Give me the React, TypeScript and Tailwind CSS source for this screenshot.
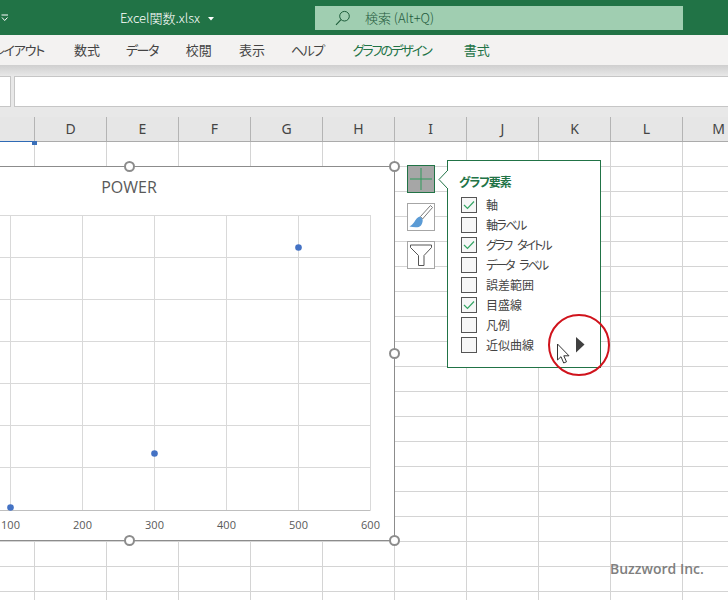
import React from "react";

const jp = "font-['Noto_Sans_CJK_JP','Noto_Sans',sans-serif] [font-feature-settings:'palt']";
const tabs: [string, string][] = [
  ["レイアウト", "ml-[-21px] w-[65px] text-right tracking-[-1.2px] text-[#444]"],
  ["数式", "ml-[30px] text-[#444]"],
  ["データ", "ml-[26px] tracking-[-1.5px] text-[#444]"],
  ["校閲", "ml-[28px] text-[#444]"],
  ["表示", "ml-[27px] text-[#444]"],
  ["ヘルプ", "ml-[26px] tracking-[-1.500px] text-[#444]"],
  ["グラフのデザイン", "ml-[29px] tracking-[-2px] text-[#217346]"],
  ["書式", "ml-[33px] text-[#217346]"],
];
const cols = ["D", "E", "F", "G", "H", "I", "J", "K", "L", "M"];
const items: [string, boolean, string][] = [
  ["軸", true, ""],
  ["軸ラベル", false, "tracking-[-1.500px]"],
  ["グラフ タイトル", true, "tracking-[-2px] [word-spacing:5px]"],
  ["データ ラベル", false, "tracking-[-2px] [word-spacing:5px]"],
  ["誤差範囲", false, ""],
  ["目盛線", true, ""],
  ["凡例", false, ""],
  ["近似曲線", false, ""],
];
const hLines = [215, 257, 299, 341, 383, 425, 467];
const vLines = [10, 82, 154, 226, 298, 370];
const labels = [100, 200, 300, 400, 500, 600];

function Handle({ className }: { className: string }) {
  return (
    <div className={"absolute w-[11px] h-[11px] rounded-full bg-white border-2 border-[#8c8c8c] " + className} />
  );
}

export default function App() {
  return (
    <div className={"relative w-[728px] h-[600px] overflow-hidden bg-white " + jp}>
      {/* title bar */}
      <div className="h-[35px] bg-[#217346] flex items-center text-white">
        <svg width="8" height="8" viewBox="0 0 8 8" className="ml-[1px] mt-[1px]">
          <path d="M0.5 1H7M1 3.5L3.7 6.5L6.5 3.5" stroke="#fff" fill="none" strokeWidth="1" />
        </svg>
        <span className="ml-[111px] text-[13px] leading-none font-light whitespace-nowrap w-[81px]">Excel関数.xlsx</span>
        <svg width="6" height="4" viewBox="0 0 6 4" className="ml-[7px] mt-[2px]">
          <path d="M0 0H6L3 3.500Z" fill="#fff" />
        </svg>
        <div className="ml-[101px] w-[368px] h-[24px] bg-[#a0ceb1] flex items-center">
          <svg width="16" height="16" viewBox="0 0 16 16" className="ml-[20px]">
            <circle cx="9.5" cy="6.2" r="4.8" fill="none" stroke="#1d5c3a" strokeWidth="1" />
            <path d="M6 9.7L1 14.800" stroke="#1d5c3a" strokeWidth="1.100" />
          </svg>
          <span className="ml-[14px] text-[13px] leading-none text-[#1f5a3c] font-light whitespace-nowrap">検索 (Alt+Q)</span>
        </div>
      </div>
      {/* tabs */}
      <div className="h-[30px] bg-[#f3f2f1] flex items-center text-[13px] whitespace-nowrap">
        {tabs.map(([t, c]) => (
          <span key={t} className={c}>{t}</span>
        ))}
      </div>
      {/* formula area */}
      <div className="h-[11px] bg-gradient-to-b from-[#cfcfcf] to-[#e8e8e8]" />
      <div className="h-[31px] bg-[#e8e8e8] flex gap-[3px] pl-0">
        <div className="w-[11px] bg-white border border-l-0 border-[#c6c6c6]" />
        <div className="flex-1 bg-white border border-r-0 border-[#c6c6c6]" />
      </div>
      <div className="h-[10px] bg-[#e8e8e8]" />
      {/* column header */}
      <div className="relative h-[25px] bg-[#e6e6e6] border-b border-[#ababab] flex">
        <div className="w-[35px] h-full border-r border-[#b4b4b4] shrink-0" />
        {cols.map((c) => (
          <div key={c} className="w-[72px] h-full shrink-0 border-r border-[#b4b4b4] flex items-center justify-center text-[14px] leading-none text-[#444] font-['Noto_Sans',sans-serif]">
            {c}
          </div>
        ))}
        <div className="absolute left-0 bottom-[-1px] w-[34px] h-px bg-[#2f6ab5]" />
        <div className="absolute left-[32px] bottom-[-4px] w-[5px] h-[4px] bg-[#3a6fb8]" />
      </div>
      {/* sheet */}
      <div className="flex flex-col">
        {Array.from({ length: 19 }).map((_, r) => (
          <div key={r} className="flex h-[25px] shrink-0">
            <div className="w-[35px] shrink-0 border-r border-b border-[#d4d4d4]" />
            {cols.map((c) => (
              <div key={c} className="w-[72px] shrink-0 border-r border-b border-[#d4d4d4]" />
            ))}
          </div>
        ))}
      </div>

      {/* chart */}
      <div className="absolute left-[-20px] top-[166px] w-[415px] h-[375px] bg-white border border-[#8c8c8c]">
        <svg width="413" height="373" viewBox="-19 167 413 373" className="block font-['Open_Sans',sans-serif]">
          <text x="129" y="193" textAnchor="middle" fontSize="16" fill="#595959">POWER</text>
          {hLines.map((y) => (
            <path key={y} d={`M-19 ${y + 0.5}H370`} stroke="#d9d9d9" />
          ))}
          {vLines.map((x) => (
            <path key={x} d={`M${x + 0.5} 215V510`} stroke="#d9d9d9" />
          ))}
          <path d="M-19 510.5H370.5" stroke="#bfbfbf" />
          {[[10, 507], [154, 453], [298, 247]].map(([x, y]) => (
            <circle key={x} cx={x + 0.5} cy={y + 0.5} r="3.3" fill="#4472c4" />
          ))}
          {labels.map((l, i) => (
            <text key={l} x={vLines[i] + 0.5} y="529" textAnchor="middle" fontSize="11" fill="#595959">{l}</text>
          ))}
        </svg>
      </div>
      <Handle className="left-[124px] top-[161px]" />
      <Handle className="left-[389px] top-[161px]" />
      <Handle className="left-[389px] top-[348px]" />
      <Handle className="left-[124px] top-[535px]" />
      <Handle className="left-[389px] top-[535px]" />

      {/* chart buttons */}
      <div className="absolute left-[407px] top-[165px] flex flex-col gap-[10px]">
        <div className="w-[28px] h-[28px] bg-[#a6a6a6] border border-[#217346] flex items-center justify-center">
          <svg width="22" height="22" viewBox="0 0 22 22">
            <path d="M11 0V22M0 11H22" stroke="#2e9a5a" strokeWidth="1" />
          </svg>
        </div>
        <div className="w-[28px] h-[28px] bg-white border border-[#a6a6a6]">
          <svg width="26" height="26" viewBox="0 0 26 26">
            <path d="M24.500 3.500L22.500 1.500L12.500 12.500L14.500 15Z" fill="#fff" stroke="#7a7a7a" strokeWidth="1" />
            <path d="M12 12.500C8 13.500 7.500 17 5.500 19C4.500 20.500 3 21.500 1.500 22.500C6 23.500 11 24 13 21.500C14.500 19 15 17 14.500 15Z" fill="#5b9bd5" />
          </svg>
        </div>
        <div className="w-[28px] h-[28px] bg-white border border-[#a6a6a6]">
          <svg width="26" height="26" viewBox="0 0 26 26">
            <path d="M2.500 3H23.500V5.500L16 13.500V23.500H10.500V13.500L2.500 5.500Z" fill="#fff" stroke="#555" strokeWidth="1" />
          </svg>
        </div>
      </div>

      {/* popup */}
      <div className="absolute left-[447px] top-[160px] w-[154px] h-[208px] bg-white border border-[#217346] pl-[11px] pt-[13px]">
        <div className="text-[12px] leading-[16px] font-bold tracking-[-1px] text-[#217346] whitespace-nowrap">グラフ要素</div>
        <div className="mt-[5px] ml-[2px] flex flex-col">
          {items.map(([t, on, track]) => (
            <div key={t} className="h-[20px] flex items-center">
              <div className="w-[16px] h-[16px] shrink-0 bg-[#f7f7f7] border border-[#555] flex items-center justify-center">
                {on && (
                  <svg width="14" height="14" viewBox="0 0 14 14">
                    <path d="M2 7L5.500 10.500L12 3.500" fill="none" stroke="#35a564" strokeWidth="1.200" />
                  </svg>
                )}
              </div>
              <span className={"ml-[9px] text-[12px] leading-none text-[#444] whitespace-nowrap " + track}>{t}</span>
            </div>
          ))}
        </div>
      </div>
      {/* notch */}
      <svg width="11" height="20" viewBox="0 0 11 20" className="absolute left-[438px] top-[170px]">
        <path d="M10 0L1 9.500L10 19" fill="#fff" stroke="#217346" strokeWidth="1" />
        <path d="M10 1V18" stroke="#fff" strokeWidth="2" />
      </svg>

      {/* right arrow, cursor and circle */}
      <svg width="9" height="16" viewBox="0 0 9 16" className="absolute left-[576px] top-[337px]">
        <path d="M0 0L8.500 7.500L0 15.500Z" fill="#404040" />
      </svg>
      <svg width="15" height="22" viewBox="0 0 15 22" className="absolute left-[556px] top-[343px]">
        <path d="M1.500 1V17L5 13.700L7.700 20L10.500 18.800L7.800 12.800H13Z" fill="#fff" stroke="#333" strokeWidth="1" />
      </svg>
      <div className="absolute left-[548px] top-[314px] w-[62px] h-[62px] rounded-full border-[2.5px] border-[#d0131c]" />

      {/* watermark */}
      <div className="absolute left-[610px] top-[559px] text-[14px] leading-[20px] font-semibold text-[#7f7f7f] whitespace-nowrap font-['Open_Sans',sans-serif]">
        Buzzword Inc.
      </div>
    </div>
  );
}
